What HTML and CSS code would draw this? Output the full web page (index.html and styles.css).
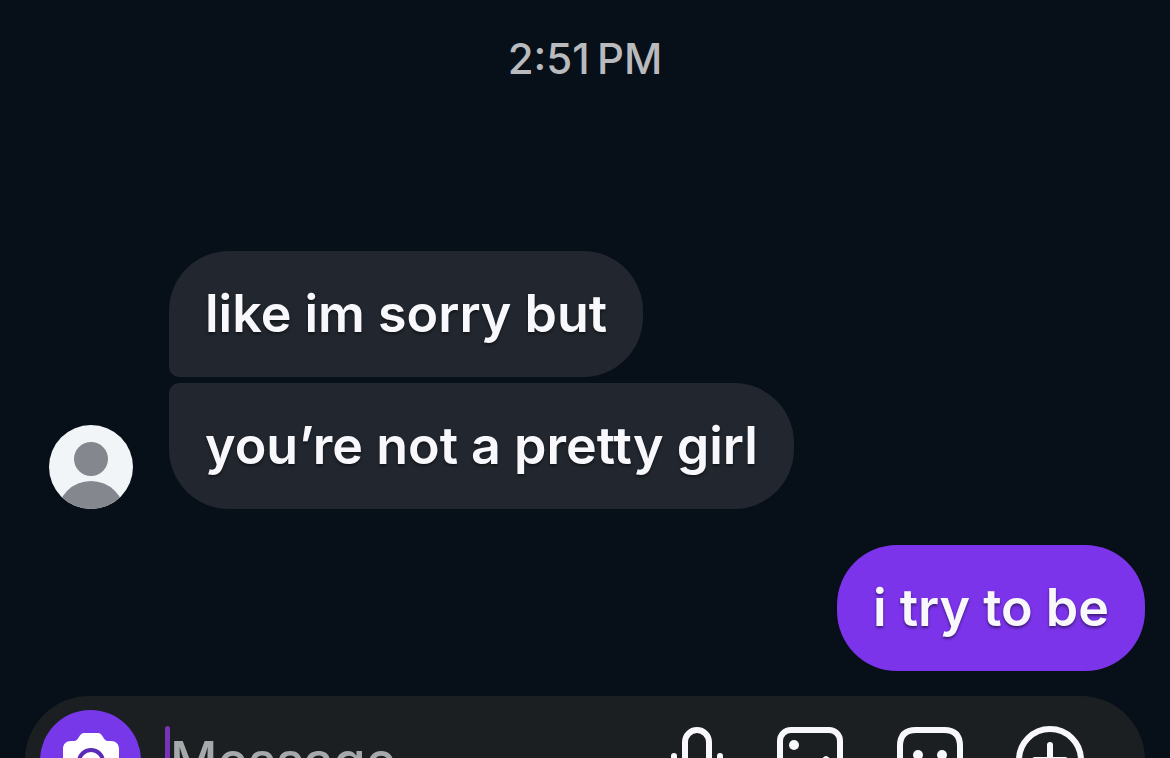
FILE: index.html
```html
<!DOCTYPE html>
<html lang="en">
<head>
<meta charset="utf-8">
<meta name="viewport" content="width=device-width, initial-scale=1">
<title>Chat</title>
<link rel="stylesheet" href="styles.css">
</head>
<body>
<main class="chat">
  <time class="timestamp" datetime="14:51">2:51&#8201;PM</time>
  <section class="thread">
    <div class="incoming">
      <svg class="avatar" viewBox="0 0 84 84" role="img" aria-label="Sender">
        <defs><clipPath id="face"><circle cx="42" cy="42" r="42"/></clipPath></defs>
        <circle cx="42" cy="42" r="42" fill="#f2f5f7"/>
        <g fill="#85878f" clip-path="url(#face)">
          <circle cx="42" cy="34" r="17"/>
          <circle cx="42" cy="90" r="34"/>
        </g>
      </svg>
      <div class="stack">
        <p class="bubble bubble-first">like im sorry but</p>
        <p class="bubble bubble-last">you’re not a pretty girl</p>
      </div>
    </div>
    <p class="bubble bubble-own">i try to be</p>
  </section>
  <form class="composer">
    <button class="camera" type="button" aria-label="Camera">
      <svg class="camera-icon" viewBox="0 0 56 54">
        <path fill="#fff" d="M8 8h3c5 0 5-8 10-8h14c5 0 5 8 10 8h3c5 0 8 3 8 8v30c0 5-3 8-8 8H8c-5 0-8-3-8-8V16c0-5 3-8 8-8z"/>
        <circle cx="28" cy="29" r="12" fill="none" stroke="#5a2bb8" stroke-width="4"/>
      </svg>
    </button>
    <label class="field">
      <span class="caret"></span>
      <input class="field-input" type="text" placeholder="Message" aria-label="Message">
    </label>
    <div class="actions">
      <button class="action action-mic" type="button" aria-label="Voice message">
        <svg class="icon" viewBox="0 0 54 68">
          <rect x="15" y="4" width="24" height="40" rx="12"/>
          <path d="M4 30v4a23 23 0 0 0 46 0v-4M27 57v8"/>
        </svg>
      </button>
      <button class="action" type="button" aria-label="Photo">
        <svg class="icon" viewBox="0 0 68 68">
          <rect x="4" y="4" width="60" height="60" rx="11"/>
          <circle class="dot" cx="18" cy="19" r="5"/>
          <path d="M4 54l14-12 12 8 20-17 14 12"/>
        </svg>
      </button>
      <button class="action" type="button" aria-label="Sticker">
        <svg class="icon" viewBox="0 0 68 68">
          <path d="M20 4h28q16 0 16 16v22L42 64H20Q4 64 4 48V20Q4 4 20 4zM22 42q12 12 24 0"/>
          <circle class="dot" cx="22" cy="29" r="5"/>
          <circle class="dot" cx="46" cy="29" r="5"/>
        </svg>
      </button>
      <button class="action" type="button" aria-label="More">
        <svg class="icon" viewBox="0 0 68 68">
          <circle cx="34" cy="34" r="31"/>
          <path d="M34 19v30M19 34h30"/>
        </svg>
      </button>
    </div>
  </form>
</main>
</body>
</html>
```
FILE: styles.css
```css
* {
  box-sizing: border-box;
}

body {
  margin: 0;
  height: 100vh;
  overflow: hidden;
  background: #070f18;
  color: #f8f8fc;
  font-family: Inter, "Noto Sans", sans-serif;
}

.chat {
  display: flex;
  flex-direction: column;
  height: 100%;
  padding: 34px 25px 0;
  overflow: hidden;
}

.timestamp {
  align-self: center;
  color: #b9babe;
  font-size: 42px;
  font-weight: 500;
  line-height: 50px;
}

.thread {
  display: flex;
  flex: none;
  flex-direction: column;
  gap: 36px;
  padding-top: 167px;
}

.incoming {
  display: flex;
  align-items: flex-end;
  gap: 36px;
  padding-left: 24px;
}

.avatar {
  width: 84px;
  height: 84px;
  flex: none;
}

.stack {
  display: flex;
  flex-direction: column;
  align-items: flex-start;
  gap: 6px;
}

.bubble {
  margin: 0;
  padding: 31px 36px;
  border-radius: 60px;
  background: #22272f;
  font-size: 52px;
  font-weight: 600;
  line-height: 64px;
  text-shadow: 0 2px 3px rgba(0, 0, 0, 0.5);
}

.bubble-first {
  border-bottom-left-radius: 10px;
}

.bubble-last {
  border-top-left-radius: 10px;
}

.bubble-own {
  align-self: flex-end;
  background: #7c34eb;
}

.composer {
  display: flex;
  flex: none;
  align-items: center;
  height: 128px;
  margin-top: 25px;
  padding: 0 61px 0 15px;
  border-radius: 64px;
  background: #1b1f21;
}

.camera {
  display: grid;
  place-items: center;
  flex: none;
  width: 101px;
  height: 101px;
  padding: 0;
  border: 0;
  border-radius: 50%;
  background: #7638e8;
}

.camera-icon {
  width: 56px;
  height: 54px;
}

.field {
  display: flex;
  flex: 1;
  align-items: center;
  min-width: 0;
  padding-left: 24px;
}

.caret {
  flex: none;
  width: 5px;
  height: 68px;
  border-radius: 3px;
  background: #7a32b8;
}

.field-input {
  flex: 1;
  min-width: 0;
  height: 72px;
  padding: 0;
  border: 0;
  outline: 0;
  background: none;
  color: inherit;
  font: 500 52px/64px Inter, "Noto Sans", sans-serif;
}

.field-input::placeholder {
  color: #a6a9aa;
  opacity: 1;
}

.actions {
  display: flex;
  gap: 52px;
}

.action {
  width: 68px;
  height: 68px;
  padding: 0;
  border: 0;
  background: none;
}

.action-mic {
  width: 54px;
}

.icon {
  display: block;
  width: 100%;
  height: 100%;
  fill: none;
  stroke: #f8f8fc;
  stroke-width: 6;
  stroke-linecap: round;
  stroke-linejoin: round;
}

.dot {
  fill: #f8f8fc;
  stroke: none;
}
```
